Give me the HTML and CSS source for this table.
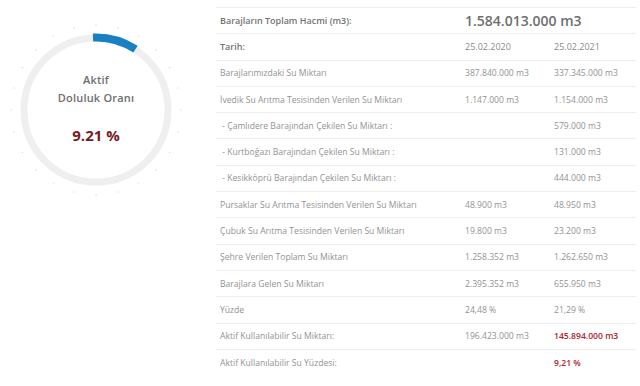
FILE: index.html
```html
<!DOCTYPE html>
<html lang="tr">
<head>
<meta charset="utf-8">
<link rel="stylesheet" href="styles.css">
</head>
<body>
<div class="page">
  <div class="gauge-col">
    <div class="gauge">
      <svg class="gauge-svg" width="180" height="180" viewBox="0 0 180 180">
        <g class="ticks" stroke="#e4e4e4" stroke-width="1">
          <line x1="90" y1="4" x2="90" y2="6" transform="rotate(0 90 90)"/>
          <line x1="90" y1="4" x2="90" y2="6" transform="rotate(15 90 90)"/>
          <line x1="90" y1="4" x2="90" y2="6" transform="rotate(30 90 90)"/>
          <line x1="90" y1="4" x2="90" y2="6" transform="rotate(45 90 90)"/>
          <line x1="90" y1="4" x2="90" y2="6" transform="rotate(60 90 90)"/>
          <line x1="90" y1="4" x2="90" y2="6" transform="rotate(75 90 90)"/>
          <line x1="90" y1="4" x2="90" y2="6" transform="rotate(90 90 90)"/>
          <line x1="90" y1="4" x2="90" y2="6" transform="rotate(105 90 90)"/>
          <line x1="90" y1="4" x2="90" y2="6" transform="rotate(120 90 90)"/>
          <line x1="90" y1="4" x2="90" y2="6" transform="rotate(135 90 90)"/>
          <line x1="90" y1="4" x2="90" y2="6" transform="rotate(150 90 90)"/>
          <line x1="90" y1="4" x2="90" y2="6" transform="rotate(165 90 90)"/>
          <line x1="90" y1="4" x2="90" y2="6" transform="rotate(180 90 90)"/>
          <line x1="90" y1="4" x2="90" y2="6" transform="rotate(195 90 90)"/>
          <line x1="90" y1="4" x2="90" y2="6" transform="rotate(210 90 90)"/>
          <line x1="90" y1="4" x2="90" y2="6" transform="rotate(225 90 90)"/>
          <line x1="90" y1="4" x2="90" y2="6" transform="rotate(240 90 90)"/>
          <line x1="90" y1="4" x2="90" y2="6" transform="rotate(255 90 90)"/>
          <line x1="90" y1="4" x2="90" y2="6" transform="rotate(270 90 90)"/>
          <line x1="90" y1="4" x2="90" y2="6" transform="rotate(285 90 90)"/>
          <line x1="90" y1="4" x2="90" y2="6" transform="rotate(300 90 90)"/>
          <line x1="90" y1="4" x2="90" y2="6" transform="rotate(315 90 90)"/>
          <line x1="90" y1="4" x2="90" y2="6" transform="rotate(330 90 90)"/>
          <line x1="90" y1="4" x2="90" y2="6" transform="rotate(345 90 90)"/>
        </g>
        <circle cx="90" cy="90" r="72" fill="none" stroke="#efefef" stroke-width="7"/>
        <path d="M 87 17.5 A 72.5 72.5 0 0 1 129.5 29.2" fill="none" stroke="#1a80c4" stroke-width="8"/>
      </svg>
      <div class="gauge-text">
        <div class="gauge-label">Aktif</div>
        <div class="gauge-label">Doluluk Oranı</div>
        <div class="gauge-value">9.21 %</div>
      </div>
    </div>
  </div>
  <table class="data">
    <colgroup>
      <col class="c1"><col class="c2"><col class="c3">
    </colgroup>
    <tr class="head">
      <td class="strong">Barajların Toplam Hacmi (m3):</td>
      <td colspan="2" class="big">1.584.013.000 m3</td>
    </tr>
    <tr class="head">
      <td class="strong">Tarih:</td>
      <td>25.02.2020</td>
      <td>25.02.2021</td>
    </tr>
    <tr><td>Barajlarımızdaki Su Miktarı</td><td>387.840.000 m3</td><td>337.345.000 m3</td></tr>
    <tr><td>İvedik Su Arıtma Tesisinden Verilen Su Miktarı</td><td>1.147.000 m3</td><td>1.154.000 m3</td></tr>
    <tr><td>&nbsp;- Çamlıdere Barajından Çekilen Su Miktarı :</td><td></td><td>579.000 m3</td></tr>
    <tr><td>&nbsp;- Kurtboğazı Barajından Çekilen Su Miktarı :</td><td></td><td>131.000 m3</td></tr>
    <tr><td>&nbsp;- Kesikköprü Barajından Çekilen Su Miktarı :</td><td></td><td>444.000 m3</td></tr>
    <tr><td>Pursaklar Su Arıtma Tesisinden Verilen Su Miktarı</td><td>48.900 m3</td><td>48.950 m3</td></tr>
    <tr><td>Çubuk Su Arıtma Tesisinden Verilen Su Miktarı</td><td>19.800 m3</td><td>23.200 m3</td></tr>
    <tr><td>Şehre Verilen Toplam Su Miktarı</td><td>1.258.352 m3</td><td>1.262.650 m3</td></tr>
    <tr><td>Barajlara Gelen Su Miktarı</td><td>2.395.352 m3</td><td>655.950 m3</td></tr>
    <tr><td>Yüzde</td><td>24,48 %</td><td>21,29 %</td></tr>
    <tr><td>Aktif Kullanılabilir Su Miktarı:</td><td>196.423.000 m3</td><td class="red">145.894.000 m3</td></tr>
    <tr><td>Aktif Kullanılabilir Su Yüzdesi:</td><td></td><td class="red">9,21 %</td></tr>
  </table>
</div>
</body>
</html>
```

FILE: styles.css
```css
html, body {
  margin: 0;
  padding: 0;
  background: #ffffff;
}

body {
  font-family: "Open Sans", "DejaVu Sans", sans-serif;
  color: #888;
}

.page {
  display: flex;
  align-items: flex-start;
  width: 640px;
  height: 386px;
  overflow: hidden;
}

.gauge-col {
  width: 216px;
  flex: none;
  padding-top: 20px;
  padding-left: 6px;
  box-sizing: border-box;
}

.gauge {
  position: relative;
  width: 180px;
  height: 180px;
}

.gauge-svg {
  display: block;
}

.gauge-text {
  position: absolute;
  left: 0;
  top: 0;
  width: 180px;
  padding-top: 51px;
  text-align: center;
}

.gauge-label {
  font-size: 11px;
  font-weight: 600;
  color: #6e6e6e;
  line-height: 18px;
  letter-spacing: 0.2px;
}

.gauge-value {
  margin-top: 18px;
  font-size: 15px;
  font-weight: 700;
  color: #7a1a1f;
  line-height: 20px;
}

.data {
  margin-top: 7px;
  width: 420px;
  border-collapse: collapse;
  table-layout: fixed;
  font-size: 8.6px;
}

.c1 { width: 245px; }
.c2 { width: 89px; }
.c3 { width: 86px; }

.data td {
  height: 26.3px;
  padding: 0 4px;
  box-sizing: border-box;
  border-top: 1px solid #eeeeee;
  white-space: nowrap;
  color: #939393;
  font-weight: 400;
  vertical-align: middle;
}

.data .head td {
  color: #8a8a8a;
  font-size: 9px;
}

.data td.strong {
  font-weight: 600;
  color: #737373;
}

.data td.big {
  font-size: 14px;
  font-weight: 600;
  color: #6e6e6e;
}

.data td.red {
  color: #b3222c;
  font-weight: 600;
}
```
